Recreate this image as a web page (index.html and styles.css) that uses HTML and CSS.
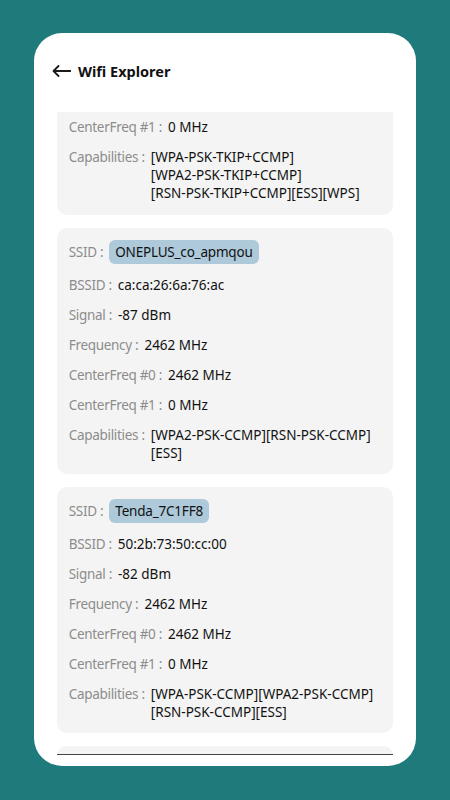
FILE: index.html
```html
<!DOCTYPE html>
<html>
<head>
<meta charset="utf-8">
<link rel="stylesheet" href="styles.css">
</head>
<body>
<div class="frame">
  <div class="header">
    <svg class="back" width="19" height="12" viewBox="0 0 19 12"><path d="M18.5 6H1.5M6.5 1L1.5 6l5 5" fill="none" stroke="#1a1a1a" stroke-width="1.8" stroke-linecap="round" stroke-linejoin="round"/></svg>
    <span class="title">Wifi Explorer</span>
  </div>
  <div class="list">
    <div class="card card-top">
      <div class="row"><span class="label">CenterFreq #1 :</span><span class="value">0 MHz</span></div>
      <div class="row"><span class="label">Capabilities :</span><span class="value"><span class="line">[WPA-PSK-TKIP+CCMP]</span><span class="line">[WPA2-PSK-TKIP+CCMP]</span><span class="line">[RSN-PSK-TKIP+CCMP][ESS][WPS]</span></span></div>
    </div>
    <div class="card">
      <div class="row"><span class="label">SSID :</span><span class="pill">ONEPLUS_co_apmqou</span></div>
      <div class="row"><span class="label">BSSID :</span><span class="value">ca:ca:26:6a:76:ac</span></div>
      <div class="row"><span class="label">Signal :</span><span class="value">-87 dBm</span></div>
      <div class="row"><span class="label">Frequency :</span><span class="value">2462 MHz</span></div>
      <div class="row"><span class="label">CenterFreq #0 :</span><span class="value">2462 MHz</span></div>
      <div class="row"><span class="label">CenterFreq #1 :</span><span class="value">0 MHz</span></div>
      <div class="row"><span class="label">Capabilities :</span><span class="value"><span class="line">[WPA2-PSK-CCMP][RSN-PSK-CCMP]</span><span class="line">[ESS]</span></span></div>
    </div>
    <div class="card">
      <div class="row"><span class="label">SSID :</span><span class="pill">Tenda_7C1FF8</span></div>
      <div class="row"><span class="label">BSSID :</span><span class="value">50:2b:73:50:cc:00</span></div>
      <div class="row"><span class="label">Signal :</span><span class="value">-82 dBm</span></div>
      <div class="row"><span class="label">Frequency :</span><span class="value">2462 MHz</span></div>
      <div class="row"><span class="label">CenterFreq #0 :</span><span class="value">2462 MHz</span></div>
      <div class="row"><span class="label">CenterFreq #1 :</span><span class="value">0 MHz</span></div>
      <div class="row"><span class="label">Capabilities :</span><span class="value"><span class="line">[WPA-PSK-CCMP][WPA2-PSK-CCMP]</span><span class="line">[RSN-PSK-CCMP][ESS]</span></span></div>
    </div>
    <div class="card card-peek"></div>
  </div>
</div>
</body>
</html>
```
FILE: styles.css
```css
html, body {
  margin: 0;
  padding: 0;
}
body {
  background: #1e7a7b;
  height: 800px;
  overflow: hidden;
  font-family: "Noto Sans", "Open Sans", sans-serif;
  padding-top: 33px;
  box-sizing: border-box;
}
.frame {
  margin: 0 34px;
  height: 733px;
  background: #ffffff;
  border-radius: 28px;
  overflow: hidden;
  display: flex;
  flex-direction: column;
}
.header {
  height: 79px;
  flex-shrink: 0;
  box-sizing: border-box;
  padding: 27px 0 0 18px;
  display: flex;
  align-items: flex-start;
  gap: 7px;
}
.back {
  display: block;
  margin-top: 5px;
}
.title {
  font-weight: 700;
  font-size: 14.5px;
  color: #111;
  line-height: 22px;
}
.list {
  height: 643px;
  flex-shrink: 0;
  overflow: hidden;
  padding: 0 23px 0 22.7px;
  display: flex;
  flex-direction: column;
  gap: 13px;
}
.card {
  flex-shrink: 0;
  background: #f4f4f4;
  border-radius: 10px;
  padding: 12px;
  display: flex;
  flex-direction: column;
  gap: 12px;
}
.card-top {
  border-radius: 0 0 10px 10px;
  padding-top: 6px;
  padding-bottom: 13px;
}
.card-peek {
  height: 8px;
  padding: 0;
  border-radius: 10px 10px 0 0;
  border-bottom: 1.5px solid #444;
}
.row {
  display: flex;
  align-items: flex-start;
  line-height: 18px;
}
.row:has(.pill) {
  align-items: center;
}
.label {
  color: #8c8c8c;
  font-size: 13.5px;
  letter-spacing: -0.3px;
  margin-right: 6px;
  white-space: nowrap;
}
.value {
  color: #111;
  font-size: 13.5px;
  display: flex;
  flex-direction: column;
}
.line {
  display: block;
}
.pill {
  background: #adc9da;
  color: #111;
  font-size: 13.5px;
  letter-spacing: -0.2px;
  border-radius: 6px;
  padding: 3px 6px;
  line-height: 18px;
}
```
